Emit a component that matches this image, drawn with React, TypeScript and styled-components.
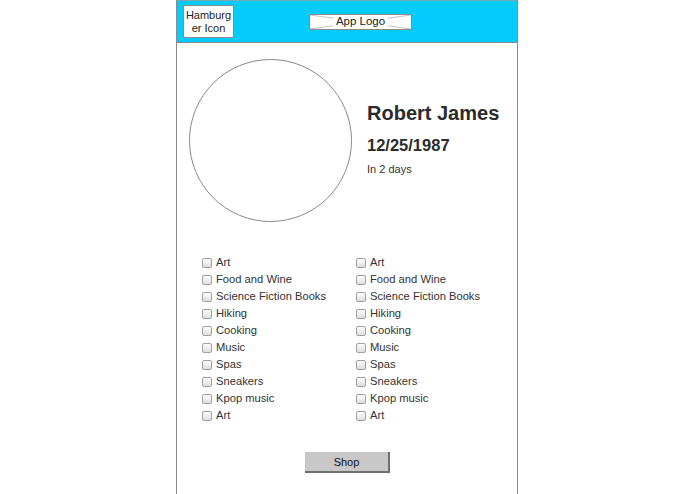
import React from 'react'
import styled, { createGlobalStyle } from 'styled-components'

const GlobalStyle = createGlobalStyle`
  html, body {
    margin: 0;
    padding: 0;
    background: #ffffff;
  }
  body {
    padding-right: 1px;
    font-family: "Liberation Sans", Arial, Helvetica, sans-serif;
    color: #333333;
  }
`

// 画面の外枠
const Frame = styled.div`
  width: 342px;
  min-height: 494px;
  margin: 0 auto;
  box-sizing: border-box;
  border-left: 1px solid #8c8c8c;
  border-right: 1px solid #8c8c8c;
  background: #ffffff;
`

// ヘッダー
const Header = styled.header`
  height: 43px;
  box-sizing: border-box;
  display: flex;
  align-items: center;
  padding-left: 6px;
  background: #03cbfc;
  border-top: 1px solid #7ea7b3;
  border-bottom: 1px solid #808a8e;
`

const HamburgerBox = styled.div`
  width: 51px;
  height: 33px;
  box-sizing: border-box;
  border: 1px solid #8a8a8a;
  background: #ffffff;
  display: flex;
  align-items: center;
  justify-content: center;
  text-align: center;
  font-size: 11px;
  line-height: 13px;
  color: #222222;
`

const LogoBox = styled.div`
  position: relative;
  width: 103px;
  height: 16px;
  margin-left: 75px;
  box-sizing: border-box;
  border: 1px solid #8a8a8a;
  background: #ffffff;
  display: flex;
  align-items: center;
  justify-content: center;
`

const LogoCross = styled.svg`
  position: absolute;
  inset: 0;
  width: 100%;
  height: 100%;
`

const LogoText = styled.span`
  position: relative;
  padding: 0 3px;
  background: #ffffff;
  font-size: 11.5px;
  line-height: 13px;
  color: #222222;
`

// プロフィール
const Profile = styled.section`
  display: flex;
  align-items: center;
  padding: 16px 0 0 12px;
`

const Avatar = styled.div`
  width: 163px;
  height: 163px;
  box-sizing: border-box;
  border-radius: 50%;
  border: 1px solid #8a8a8a;
  flex-shrink: 0;
`

const Info = styled.div`
  display: flex;
  flex-direction: column;
  margin-left: 15px;
  padding-bottom: 4px;
`

const Name = styled.h1`
  margin: 0;
  font-size: 20px;
  line-height: 24px;
  font-weight: bold;
  color: #2b2b2b;
`

const Birthday = styled.h2`
  margin: 10.7px 0 0;
  font-size: 16.5px;
  line-height: 20px;
  font-weight: bold;
  color: #2b2b2b;
`

const Countdown = styled.p`
  margin: 7px 0 0;
  font-size: 11px;
  line-height: 14px;
  color: #333333;
`

// 興味リスト
const Interests = styled.div`
  display: grid;
  grid-template-columns: 154px 154px;
  margin-top: 32px;
  padding-left: 25px;
`

const Row = styled.label`
  display: flex;
  align-items: center;
  height: 17px;
  font-size: 11.2px;
  line-height: 17px;
  color: #333333;
  white-space: nowrap;
`

const Check = styled.input`
  appearance: none;
  -webkit-appearance: none;
  width: 10px;
  height: 10px;
  margin: 0 4px 0 0;
  box-sizing: border-box;
  border: 1px solid #a0a0a0;
  border-radius: 2px;
  background: linear-gradient(#fdfdfd, #dedede);
  flex-shrink: 0;
`

const Footer = styled.div`
  display: flex;
  justify-content: center;
  margin-top: 28px;
  padding-left: 1px;
`

const ShopButton = styled.button`
  width: 85px;
  height: 21px;
  box-sizing: border-box;
  padding: 0;
  border: none;
  border-right: 2px solid #6f6f6f;
  border-bottom: 2px solid #6f6f6f;
  background: #c8c8c8;
  font-family: inherit;
  font-size: 11px;
  color: #111111;
`

const interests = [
  'Art',
  'Food and Wine',
  'Science Fiction Books',
  'Hiking',
  'Cooking',
  'Music',
  'Spas',
  'Sneakers',
  'Kpop music',
  'Art',
]

const App = () => {
  return (
    <>
      <GlobalStyle />
      <Frame>
        <Header>
          <HamburgerBox>
            Hamburg
            <br />
            er Icon
          </HamburgerBox>
          <LogoBox>
            <LogoCross viewBox="0 0 100 14" preserveAspectRatio="none">
              <line x1="0" y1="0" x2="100" y2="14" stroke="#9a9a9a" strokeWidth="0.6" vectorEffect="non-scaling-stroke" />
              <line x1="0" y1="14" x2="100" y2="0" stroke="#9a9a9a" strokeWidth="0.6" vectorEffect="non-scaling-stroke" />
            </LogoCross>
            <LogoText>App Logo</LogoText>
          </LogoBox>
        </Header>

        <Profile>
          <Avatar />
          <Info>
            <Name>Robert James</Name>
            <Birthday>12/25/1987</Birthday>
            <Countdown>In 2 days</Countdown>
          </Info>
        </Profile>

        <Interests>
          {interests.map((item, i) => (
            <React.Fragment key={i}>
              <Row>
                <Check type="checkbox" />
                {item}
              </Row>
              <Row>
                <Check type="checkbox" />
                {item}
              </Row>
            </React.Fragment>
          ))}
        </Interests>

        <Footer>
          <ShopButton>Shop</ShopButton>
        </Footer>
      </Frame>
    </>
  )
}

export default App
